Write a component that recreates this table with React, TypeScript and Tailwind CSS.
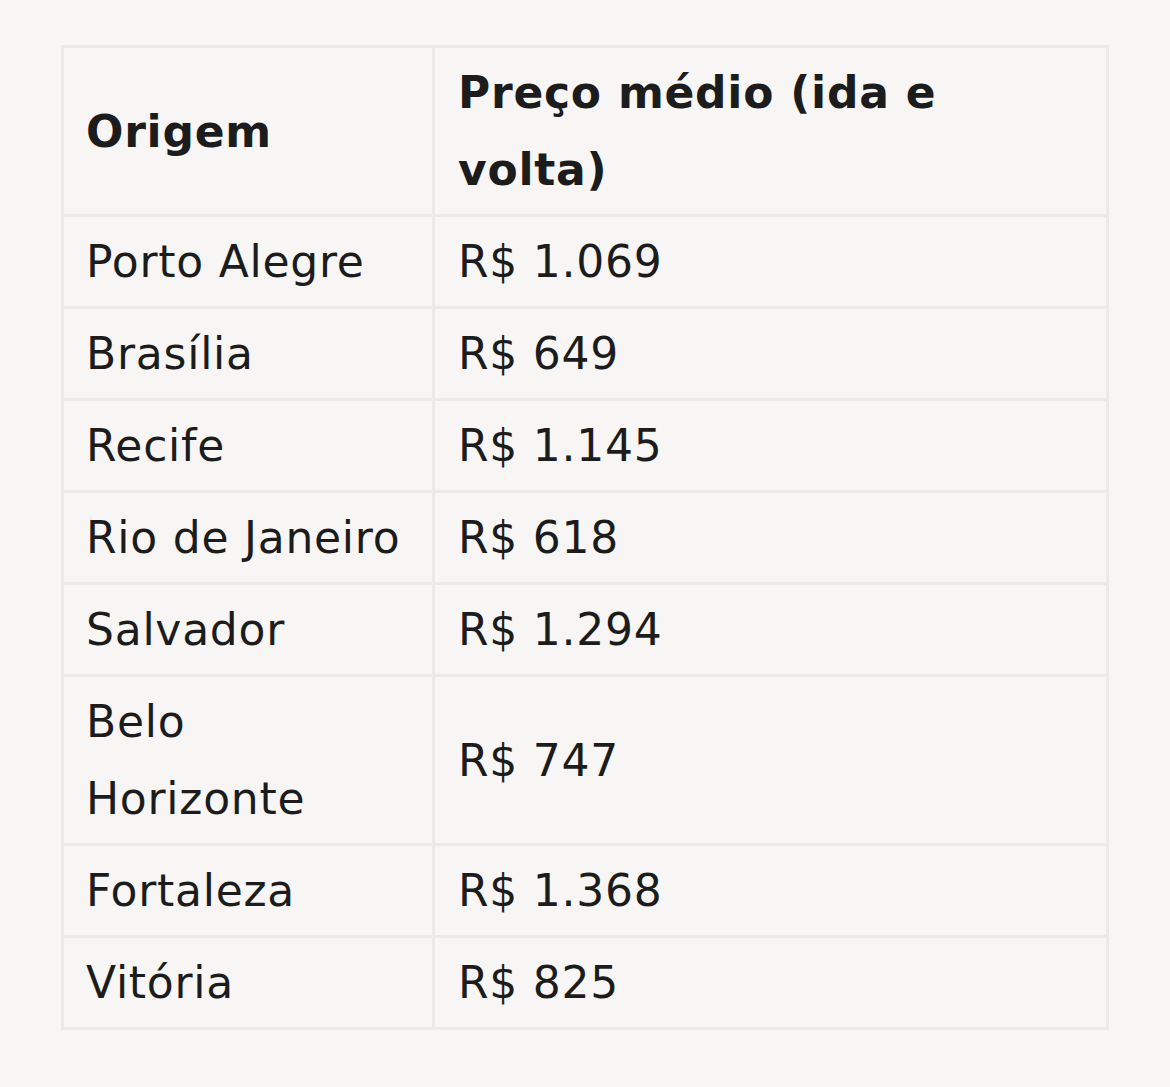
const rows: { origem: string; preco: string }[] = [
  { origem: "Porto Alegre", preco: "R$ 1.069" },
  { origem: "Brasília", preco: "R$ 649" },
  { origem: "Recife", preco: "R$ 1.145" },
  { origem: "Rio de Janeiro", preco: "R$ 618" },
  { origem: "Salvador", preco: "R$ 1.294" },
  { origem: "Belo Horizonte", preco: "R$ 747" },
  { origem: "Fortaleza", preco: "R$ 1.368" },
  { origem: "Vitória", preco: "R$ 825" },
];

export default function App() {
  return (
    <div className="min-h-[1087px] bg-[#f7f6f4] px-[61px] pt-[45px] font-['DejaVu_Sans',sans-serif] text-[44px] leading-[77px] tracking-[0.75px] text-[#1c1c1c]">
      <table className="w-full border-collapse border-[3px] border-[#ebeae8]">
        <thead>
          <tr>
            <th className="w-[371px] border-[3px] border-[#ebeae8] py-[6px] pl-[22px] pr-4 text-left align-middle font-bold">
              Origem
            </th>
            <th className="border-[3px] border-[#ebeae8] py-[6px] pl-[23px] pr-[130px] text-left align-middle font-bold">
              Preço médio (ida e volta)
            </th>
          </tr>
        </thead>
        <tbody>
          {rows.map((r) => (
            <tr key={r.origem}>
              <td className="w-[371px] border-[3px] border-[#ebeae8] py-[6px] pl-[22px] pr-4 align-middle">
                {r.origem === "Belo Horizonte" ? (
                  <>
                    Belo
                    <br />
                    Horizonte
                  </>
                ) : (
                  r.origem
                )}
              </td>
              <td className="border-[3px] border-[#ebeae8] py-[6px] pl-[23px] align-middle">
                {r.preco}
              </td>
            </tr>
          ))}
        </tbody>
      </table>
    </div>
  );
}
